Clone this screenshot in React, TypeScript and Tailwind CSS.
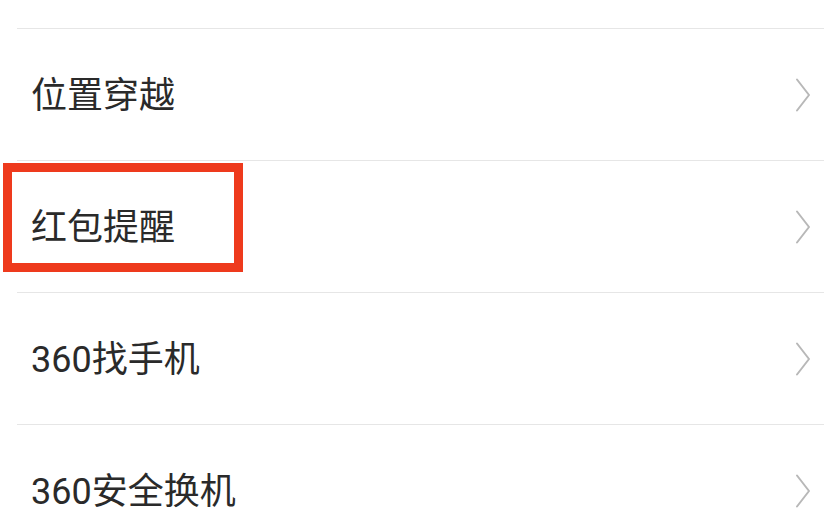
import React from "react";

const items = ["位置穿越", "红包提醒", "360找手机", "360安全换机"];

function Chevron() {
  return (
    <svg width="16" height="34" viewBox="0 0 16 34" fill="none" className="shrink-0">
      <path d="M2 1.5 L14 17 L2 32.5" stroke="#b8b8b8" strokeWidth="2" strokeLinecap="round" strokeLinejoin="round" />
    </svg>
  );
}

export default function App() {
  return (
    <div
      className="relative w-[824px] h-[521px] overflow-hidden bg-white"
      style={{ fontFamily: "Roboto, 'Noto Sans CJK SC', sans-serif" }}
    >
      <div className="h-[28px]" />
      <div className="flex flex-col">
        {items.map((t) => (
          <div
            key={t}
            className="ml-[17px] h-[132px] border-t border-[#e6e6e6] flex items-center justify-between pl-[14px] pr-[13px]"
          >
            <span className="text-[36px] leading-none text-[#2a2a2a] pt-[3px]">{t}</span>
            <Chevron />
          </div>
        ))}
      </div>
      <div className="absolute left-[3px] top-[163px] w-[240px] h-[109px] border-[9px] border-[#ee3a1d]" />
    </div>
  );
}
